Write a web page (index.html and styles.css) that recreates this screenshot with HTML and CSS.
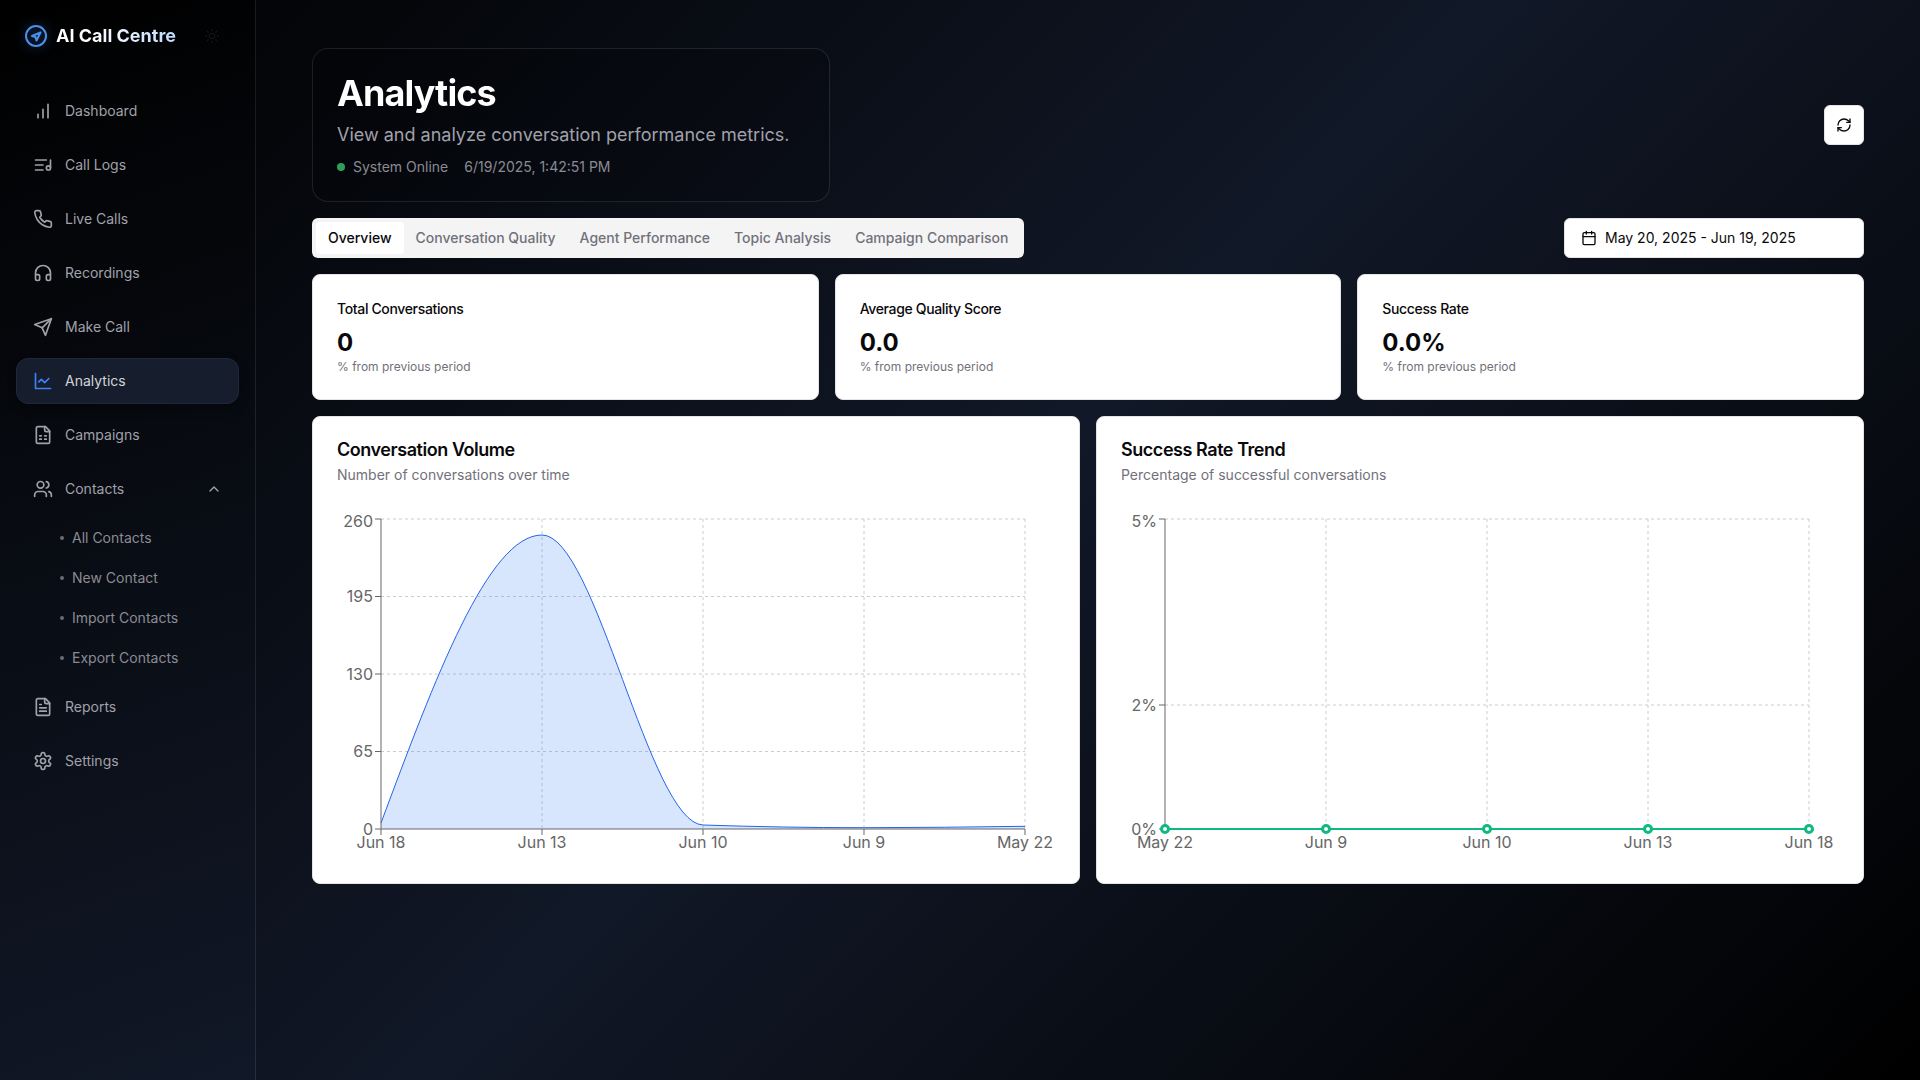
FILE: index.html
```html
<!DOCTYPE html>
<html>
<head>
    <meta charset="utf-8">
    <title>Analytics</title>
    <link rel="stylesheet" href="styles.css">
</head>
<body>

<div class="app">
    <aside class="sidebar">
        <div class="brand">
            <svg class="brand-icon" viewBox="0 0 24 24"><circle cx="12" cy="12" r="10"/><path d="M16.5 8.5 8 12l3.5 1 1 3.5Z"/></svg>
            <span class="brand-name">AI Call Centre</span>
            <svg class="theme-icon" viewBox="0 0 24 24"><circle cx="12" cy="12" r="4"/><path d="M12 2v2M12 20v2M4.93 4.93l1.41 1.41M17.66 17.66l1.41 1.41M2 12h2M20 12h2M6.34 17.66l-1.41 1.41M19.07 4.93l-1.41 1.41"/></svg>
        </div>
        <nav class="nav">
            <a class="nav-item"><svg class="icon" viewBox="0 0 24 24"><path d="M12 20V10M18 20V4M6 20v-4"/></svg>Dashboard</a>
            <a class="nav-item"><svg class="icon" viewBox="0 0 24 24"><path d="M21 15V6"/><path d="M18.5 18a2.5 2.5 0 1 0 0-5 2.5 2.5 0 0 0 0 5Z"/><path d="M12 12H3M16 6H3M12 18H3"/></svg>Call Logs</a>
            <a class="nav-item"><svg class="icon" viewBox="0 0 24 24"><path d="M22 16.92v3a2 2 0 0 1-2.18 2 19.79 19.79 0 0 1-8.63-3.07 19.5 19.5 0 0 1-6-6 19.79 19.79 0 0 1-3.07-8.67A2 2 0 0 1 4.11 2h3a2 2 0 0 1 2 1.72 12.84 12.84 0 0 0 .7 2.81 2 2 0 0 1-.45 2.11L8.09 9.91a16 16 0 0 0 6 6l1.27-1.27a2 2 0 0 1 2.11-.45 12.84 12.84 0 0 0 2.81.7A2 2 0 0 1 22 16.92z"/></svg>Live Calls</a>
            <a class="nav-item"><svg class="icon" viewBox="0 0 24 24"><path d="M3 14h3a2 2 0 0 1 2 2v3a2 2 0 0 1-2 2H5a2 2 0 0 1-2-2v-7a9 9 0 0 1 18 0v7a2 2 0 0 1-2 2h-1a2 2 0 0 1-2-2v-3a2 2 0 0 1 2-2h3"/></svg>Recordings</a>
            <a class="nav-item"><svg class="icon" viewBox="0 0 24 24"><path d="m22 2-7 20-4-9-9-4Z"/><path d="M22 2 11 13"/></svg>Make Call</a>
            <a class="nav-item active"><svg class="icon" viewBox="0 0 24 24"><path d="M3 3v18h18"/><path d="m19 9-5 5-4-4-3 3"/></svg>Analytics</a>
            <a class="nav-item"><svg class="icon" viewBox="0 0 24 24"><path d="M15 2H6a2 2 0 0 0-2 2v16a2 2 0 0 0 2 2h12a2 2 0 0 0 2-2V7Z"/><path d="M14 2v4a2 2 0 0 0 2 2h4"/><path d="M8 13h2M14 13h2M8 17h2M14 17h2"/></svg>Campaigns</a>
            <a class="nav-item"><svg class="icon" viewBox="0 0 24 24"><path d="M16 21v-2a4 4 0 0 0-4-4H6a4 4 0 0 0-4 4v2"/><circle cx="9" cy="7" r="4"/><path d="M22 21v-2a4 4 0 0 0-3-3.87"/><path d="M16 3.13a4 4 0 0 1 0 7.75"/></svg>Contacts<svg class="chevron" viewBox="0 0 24 24"><path d="m18 15-6-6-6 6"/></svg></a>
            <div class="subnav">
                <a class="sub-item">All Contacts</a>
                <a class="sub-item">New Contact</a>
                <a class="sub-item">Import Contacts</a>
                <a class="sub-item">Export Contacts</a>
            </div>
            <a class="nav-item"><svg class="icon" viewBox="0 0 24 24"><path d="M15 2H6a2 2 0 0 0-2 2v16a2 2 0 0 0 2 2h12a2 2 0 0 0 2-2V7Z"/><path d="M14 2v4a2 2 0 0 0 2 2h4"/><path d="M10 9H8M16 13H8M16 17H8"/></svg>Reports</a>
            <a class="nav-item"><svg class="icon" viewBox="0 0 24 24"><path d="M12.22 2h-.44a2 2 0 0 0-2 2v.18a2 2 0 0 1-1 1.73l-.43.25a2 2 0 0 1-2 0l-.15-.08a2 2 0 0 0-2.73.73l-.22.38a2 2 0 0 0 .73 2.73l.15.1a2 2 0 0 1 1 1.72v.51a2 2 0 0 1-1 1.74l-.15.09a2 2 0 0 0-.73 2.73l.22.38a2 2 0 0 0 2.73.73l.15-.08a2 2 0 0 1 2 0l.43.25a2 2 0 0 1 1 1.73V20a2 2 0 0 0 2 2h.44a2 2 0 0 0 2-2v-.18a2 2 0 0 1 1-1.73l.43-.25a2 2 0 0 1 2 0l.15.08a2 2 0 0 0 2.73-.73l.22-.39a2 2 0 0 0-.73-2.73l-.15-.08a2 2 0 0 1-1-1.74v-.5a2 2 0 0 1 1-1.74l.15-.09a2 2 0 0 0 .73-2.73l-.22-.38a2 2 0 0 0-2.73-.73l-.15.08a2 2 0 0 1-2 0l-.43-.25a2 2 0 0 1-1-1.73V4a2 2 0 0 0-2-2z"/><circle cx="12" cy="12" r="3"/></svg>Settings</a>
        </nav>
    </aside>

    <main class="main">
        <div class="page-head">
            <div class="hero">
                <h1>Analytics</h1>
                <p class="hero-sub">View and analyze conversation performance metrics.</p>
                <div class="status"><span class="status-dot"></span><span>System Online</span><span>6/19/2025, 1:42:51 PM</span></div>
            </div>
            <button class="refresh"><svg viewBox="0 0 24 24"><path d="M3 12a9 9 0 0 1 9-9 9.75 9.75 0 0 1 6.74 2.74L21 8"/><path d="M21 3v5h-5"/><path d="M21 12a9 9 0 0 1-9 9 9.75 9.75 0 0 1-6.74-2.74L3 16"/><path d="M8 16H3v5"/></svg></button>
        </div>

        <div class="toolbar">
            <div class="tabs">
                <span class="tab active">Overview</span>
                <span class="tab">Conversation Quality</span>
                <span class="tab">Agent Performance</span>
                <span class="tab">Topic Analysis</span>
                <span class="tab">Campaign Comparison</span>
            </div>
            <div class="date-range"><svg viewBox="0 0 24 24"><path d="M8 2v4M16 2v4"/><rect x="3" y="4" width="18" height="18" rx="2"/><path d="M3 10h18"/></svg>May 20, 2025 - Jun 19, 2025</div>
        </div>

        <div class="stats">
            <div class="card stat">
                <div class="stat-title">Total Conversations</div>
                <div class="stat-value">0</div>
                <div class="stat-note">% from previous period</div>
            </div>
            <div class="card stat">
                <div class="stat-title">Average Quality Score</div>
                <div class="stat-value">0.0</div>
                <div class="stat-note">% from previous period</div>
            </div>
            <div class="card stat">
                <div class="stat-title">Success Rate</div>
                <div class="stat-value">0.0%</div>
                <div class="stat-note">% from previous period</div>
            </div>
        </div>

        <div class="charts">
            <div class="card chart-card">
                <h3>Conversation Volume</h3>
                <p class="chart-sub">Number of conversations over time</p>
                <svg class="chart" viewBox="0 0 718 350">
                    <g class="grid">
                        <path d="M44 10H688M44 87.5H688M44 165H688M44 242.5H688"/>
                        <path d="M205 10V320M366 10V320M527 10V320M688 10V320"/>
                    </g>
                    <path class="area-fill" d="M44 314C97.67 170.1 151.33 26 205 26C258.67 26 312.33 314.2 366 316C419.67 317.8 473.33 318.7 527 318.7C580.67 318.7 634.33 318 688 317.3L688 320L44 320Z"/>
                    <path class="area-line" d="M44 314C97.67 170.1 151.33 26 205 26C258.67 26 312.33 314.2 366 316C419.67 317.8 473.33 318.7 527 318.7C580.67 318.7 634.33 318 688 317.3"/>
                    <path class="axis" d="M44 10V320H688M38 10H44M38 87.5H44M38 165H44M38 242.5H44M38 320H44M44 320V326M205 320V326M366 320V326M527 320V326M688 320V326"/>
                    <g class="y-ticks">
                        <text x="36" y="18">260</text>
                        <text x="36" y="93">195</text>
                        <text x="36" y="170.5">130</text>
                        <text x="36" y="248">65</text>
                        <text x="36" y="325.5">0</text>
                    </g>
                    <g class="x-ticks">
                        <text x="44" y="339">Jun 18</text>
                        <text x="205" y="339">Jun 13</text>
                        <text x="366" y="339">Jun 10</text>
                        <text x="527" y="339">Jun 9</text>
                        <text x="688" y="339">May 22</text>
                    </g>
                </svg>
            </div>
            <div class="card chart-card">
                <h3>Success Rate Trend</h3>
                <p class="chart-sub">Percentage of successful conversations</p>
                <svg class="chart" viewBox="0 0 718 350">
                    <g class="grid">
                        <path d="M44 10H688M44 196H688"/>
                        <path d="M205 10V320M366 10V320M527 10V320M688 10V320"/>
                    </g>
                    <path class="axis" d="M44 10V320M38 10H44M38 196H44M38 320H44"/>
                    <path class="trend-line" d="M44 320H688"/>
                    <g class="trend-dots">
                        <circle cx="44" cy="320" r="3.5"/>
                        <circle cx="205" cy="320" r="3.5"/>
                        <circle cx="366" cy="320" r="3.5"/>
                        <circle cx="527" cy="320" r="3.5"/>
                        <circle cx="688" cy="320" r="3.5"/>
                    </g>
                    <g class="y-ticks">
                        <text x="36" y="18">5%</text>
                        <text x="36" y="202">2%</text>
                        <text x="36" y="325.5">0%</text>
                    </g>
                    <g class="x-ticks">
                        <text x="44" y="339">May 22</text>
                        <text x="205" y="339">Jun 9</text>
                        <text x="366" y="339">Jun 10</text>
                        <text x="527" y="339">Jun 13</text>
                        <text x="688" y="339">Jun 18</text>
                    </g>
                </svg>
            </div>
        </div>
    </main>
</div>

</body>
</html>
```

FILE: styles.css
```css
* {
    box-sizing: border-box;
}

html, body {
    margin: 0;
    height: 100%;
}

body {
    font-family: Inter, "Liberation Sans", sans-serif;
    font-size: 14px;
    line-height: 20px;
    color: #09090b;
    background: #000;
}

.app {
    display: flex;
    height: 1080px;
    overflow: hidden;
    background: linear-gradient(135deg, #000 0%, #111827 50%, #000 100%);
}

/* sidebar */
.sidebar {
    width: 256px;
    flex: none;
    background: linear-gradient(160deg, #000 0%, #111827 100%);
    border-right: 1px solid rgba(255, 255, 255, 0.1);
}

.brand {
    display: flex;
    align-items: center;
    height: 72px;
    padding-left: 24px;
}

.brand-icon {
    width: 24px;
    height: 24px;
    fill: none;
    stroke: #4a90e8;
    stroke-width: 2;
    stroke-linecap: round;
    stroke-linejoin: round;
    filter: drop-shadow(0 0 6px rgba(59, 130, 246, 0.5));
}

.brand-name {
    margin-left: 8px;
    font-size: 18px;
    line-height: 28px;
    font-weight: 700;
    background: linear-gradient(90deg, #fff 30%, #bfdbfe 100%);
    -webkit-background-clip: text;
    background-clip: text;
    color: transparent;
}

.theme-icon {
    width: 16px;
    height: 16px;
    margin-left: 28px;
    fill: none;
    stroke: #121317;
    stroke-width: 2;
    stroke-linecap: round;
}

.nav {
    display: flex;
    flex-direction: column;
    gap: 8px;
    padding: 16px;
}

.nav-item {
    display: flex;
    align-items: center;
    gap: 12px;
    height: 46px;
    padding: 0 16px;
    border: 1px solid transparent;
    border-radius: 12px;
    color: #a1a1aa;
}

.nav-item.active {
    color: #d4d4d8;
    background: #161e2d;
    border-color: #20283a;
    box-shadow: 0 4px 10px rgba(0, 0, 0, 0.35);
}

.icon {
    width: 20px;
    height: 20px;
    flex: none;
    fill: none;
    stroke: #a1a1aa;
    stroke-width: 2;
    stroke-linecap: round;
    stroke-linejoin: round;
}

.nav-item.active .icon {
    stroke: #3b82f6;
}

.chevron {
    width: 16px;
    height: 16px;
    margin-left: auto;
    fill: none;
    stroke: #a1a1aa;
    stroke-width: 2;
    stroke-linecap: round;
    stroke-linejoin: round;
}

.subnav {
    display: flex;
    flex-direction: column;
    gap: 8px;
    margin: 2px 0;
    padding-left: 56px;
}

.sub-item {
    position: relative;
    height: 32px;
    line-height: 32px;
    color: #8b8b93;
}

.sub-item::before {
    content: "";
    position: absolute;
    left: -12px;
    top: 14px;
    width: 4px;
    height: 4px;
    border-radius: 50%;
    background: #6b6b73;
}

/* main column */
.main {
    flex: 1;
    min-width: 0;
    padding: 48px 56px;
}

.page-head {
    display: flex;
    align-items: center;
    justify-content: space-between;
    margin-bottom: 16px;
}

.hero {
    padding: 24px 39px 24px 24px;
    height: 154px;
    border: 1px solid rgba(255, 255, 255, 0.1);
    border-radius: 16px;
    background: rgba(0, 0, 0, 0.15);
}

h1 {
    margin: 0;
    font-size: 36px;
    line-height: 40px;
    font-weight: 700;
    letter-spacing: -0.025em;
    background: linear-gradient(90deg, #fff 50%, #dbeafe 100%);
    -webkit-background-clip: text;
    background-clip: text;
    color: transparent;
}

.hero-sub {
    margin: 8px 0 0;
    font-size: 18px;
    line-height: 28px;
    color: #a1a1aa;
}

.status {
    display: flex;
    align-items: center;
    gap: 16px;
    margin-top: 8px;
    color: #8b8b93;
}

.status-dot {
    width: 8px;
    height: 8px;
    margin-right: -8px;
    border-radius: 50%;
    background: #2f9e5b;
}

.refresh {
    display: flex;
    align-items: center;
    justify-content: center;
    width: 40px;
    height: 40px;
    padding: 0;
    background: #fff;
    border: 1px solid #e4e4e7;
    border-radius: 6px;
}

.refresh svg, .date-range svg {
    width: 16px;
    height: 16px;
    flex: none;
    fill: none;
    stroke: #09090b;
    stroke-width: 2;
    stroke-linecap: round;
    stroke-linejoin: round;
}

.toolbar {
    display: flex;
    justify-content: space-between;
    margin-bottom: 16px;
}

.tabs {
    display: flex;
    height: 40px;
    padding: 4px;
    background: #f4f4f5;
    border-radius: 6px;
}

.tab {
    padding: 6px 12px;
    font-weight: 500;
    color: #71717a;
    border-radius: 4px;
}

.tab.active {
    color: #09090b;
    background: #fff;
}

.date-range {
    display: flex;
    align-items: center;
    gap: 8px;
    width: 300px;
    height: 40px;
    padding: 0 16px;
    background: #fff;
    border: 1px solid #e4e4e7;
    border-radius: 6px;
}

/* cards */
.card {
    background: #fff;
    border: 1px solid #e4e4e7;
    border-radius: 8px;
    padding: 24px;
}

.stats {
    display: grid;
    grid-template-columns: repeat(3, 1fr);
    gap: 16px;
    margin-bottom: 16px;
}

.stat-title {
    font-weight: 500;
    letter-spacing: -0.025em;
}

.stat-value {
    margin-top: 8px;
    font-size: 24px;
    line-height: 32px;
    font-weight: 700;
}

.stat-note {
    font-size: 12px;
    line-height: 16px;
    color: #71717a;
}

.charts {
    display: grid;
    grid-template-columns: repeat(2, 1fr);
    gap: 16px;
}

h3 {
    margin: 0;
    font-size: 18px;
    line-height: 18px;
    font-weight: 600;
    letter-spacing: -0.025em;
}

.chart-sub {
    margin: 6px 0 24px;
    color: #71717a;
}

.chart {
    display: block;
    width: 718px;
    height: 350px;
}

.grid path {
    fill: none;
    stroke: #ccc;
    stroke-dasharray: 3 3;
}

.axis {
    fill: none;
    stroke: #666;
}

.area-fill {
    fill: #3b82f6;
    fill-opacity: 0.2;
}

.area-line {
    fill: none;
    stroke: #2563eb;
}

.trend-line {
    fill: none;
    stroke: #10b981;
    stroke-width: 2;
}

.trend-dots circle {
    fill: #fff;
    stroke: #10b981;
    stroke-width: 3;
}

.y-ticks text, .x-ticks text {
    font-size: 16px;
    fill: #666;
}

.y-ticks text {
    text-anchor: end;
}

.x-ticks text {
    text-anchor: middle;
}
```
